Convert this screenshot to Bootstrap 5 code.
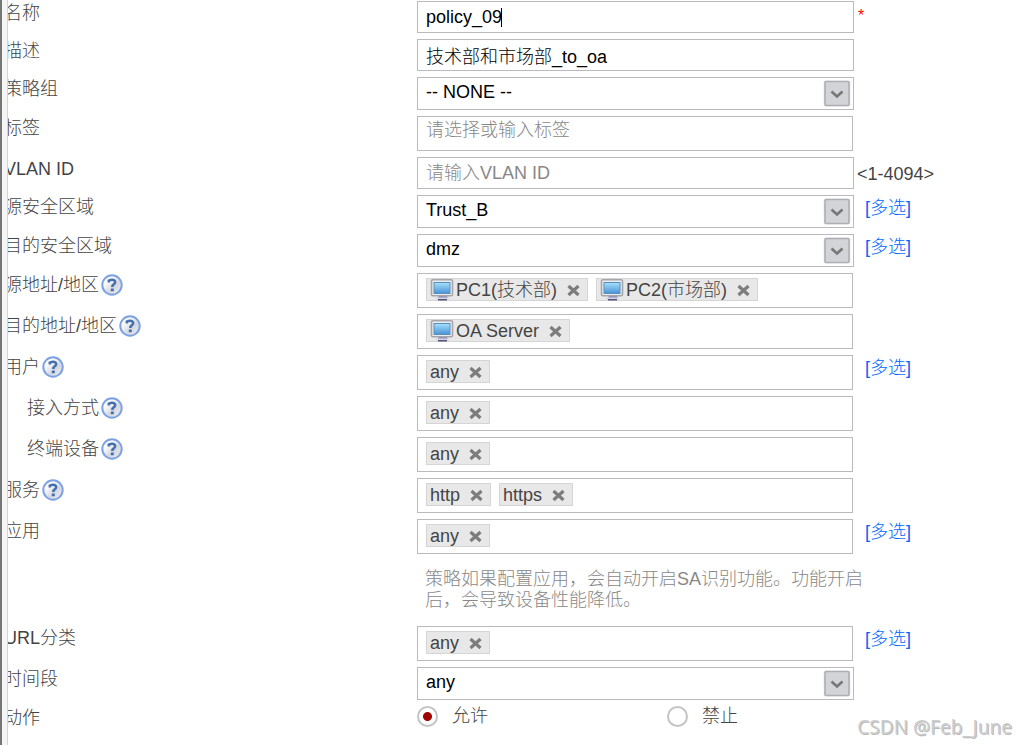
<!DOCTYPE html>
<html lang="zh-CN">
<head>
<meta charset="utf-8">
<meta name="viewport" content="width=device-width, initial-scale=1">
<title>安全策略</title>
<link href="https://cdn.jsdelivr.net/npm/bootstrap@5.3.0/dist/css/bootstrap.min.css" rel="stylesheet">
<style>
body{font-family:"Liberation Sans","Noto Sans CJK SC",sans-serif;font-weight:300;font-size:18px;line-height:22px;color:#444;background:#f5f5f5;border-left:2px solid #757575;padding-left:5px;min-height:100vh}
.panel{background:#fff;border-left:1px solid #d4d4d4;min-height:100vh;padding-top:1px;overflow:hidden}
.policy-row{display:grid;grid-template-columns:minmax(0,409fr) minmax(0,437fr) minmax(0,162fr);margin-bottom:6px}
.field-name{margin-left:-4px;display:flex;align-items:center;gap:2px;height:24px}
.field-name.sub{padding-left:23px}
.field-name svg{width:22px;height:22px;display:block}
.box,.form-control.box,.form-select.box{border:1px solid #b9b9be;border-radius:0;color:#000;font-size:18px;font-weight:300;line-height:22px;padding:0 8px;box-shadow:none;background-color:#fff}
.form-control.box{height:32px}
.form-control.box::placeholder{color:#888;opacity:1}
.form-control.tag-input{height:35px;padding-bottom:7px;width:calc(100% - 1px)}
.form-select.box{height:33px;padding:0 36px 3px 8px;background-repeat:no-repeat;background-position:right 2px top 2px;background-size:28px 27px;background-image:url("data:image/svg+xml,%3Csvg xmlns='http://www.w3.org/2000/svg' viewBox='0 0 28 27'%3E%3Crect x='.5' y='.5' width='27' height='26' rx='2' fill='%23eeeeef'/%3E%3Crect x='2' y='1.5' width='24' height='24' rx='1' fill='%23d3d4d7' stroke='%23acafb3' stroke-width='1.6'/%3E%3Cpath d='M8.5 11.5l5.5 5 5.5-5' fill='none' stroke='%23777' stroke-width='2.6'/%3E%3C/svg%3E")}
.tag-box{height:35px;width:calc(100% - 1px);padding:4px 8px!important;display:flex;align-items:flex-start;gap:8px}
.chip{height:23px;border:1px solid #d5d5d5;background:#e8e8e8;color:#444;display:flex;align-items:center;padding:0 7px 0 3px;white-space:nowrap;line-height:22px}
.chip .pc{width:24px;height:22px;margin-right:2px}
.chip button{border:0;background:none;padding:0;margin-left:10px;width:13px;height:22px;display:flex;align-items:center}
.chip button svg{width:13px;height:13px;margin-top:1px}
.extra{padding:2px 0 0 11px}
.extra a{color:#06f;text-decoration:none}
.hint{padding:6px 0 0 3px}
.star{color:red;padding:4px 0 0 4px;font-size:16px}
.note{margin:15px -12px 9px 0;padding-left:8px;line-height:21px;color:#888}
.caret{left:84px;top:7px;width:1px;height:19px;background:#000}
.choices{display:flex}
.choice{display:flex;flex:none;width:250px;gap:14px;line-height:20px}
.form-check-input.dot{width:21px;height:21px;margin:0;border:2px solid #c4c4c4;background-color:#fff;box-shadow:none;flex:none}
.form-check-input.dot:checked{border-color:#c4c4c4;background-color:#fff;background-image:radial-gradient(circle,#a00000 4px,transparent 5px);background-size:100% 100%}
.watermark{right:4px;bottom:5px;font-family:"Noto Sans",sans-serif;font-size:19px;font-weight:400;line-height:26px;color:#ccc;text-shadow:1px 1px 0 #bbb}
.symbols{width:0;height:0}
</style>
</head>
<body class="position-relative">
<svg class="symbols position-absolute" aria-hidden="true">
  <defs>
    <linearGradient id="scr" x1="0" y1="0" x2="0" y2="1"><stop offset="0" stop-color="#a5e1fa"/><stop offset="1" stop-color="#4a92d8"/></linearGradient>
    <linearGradient id="hg" x1="0" y1="0" x2="1" y2="1"><stop offset=".3" stop-color="#fafafc"/><stop offset=".6" stop-color="#d5d7e0"/><stop offset="1" stop-color="#f2f2f5"/></linearGradient>
  </defs>
  <symbol id="pc" viewBox="0 0 24 22">
    <path d="M9 17h8l1 3H7z" fill="#8a88b8"/><rect x="6" y="18.5" width="13" height="2" rx="1" fill="#d6d6e6"/><rect x="8" y="20" width="9" height="1.5" fill="#555579"/>
    <rect x="1.5" y=".8" width="21" height="16" rx="1.5" fill="#eeeef0" stroke="#a5a5ab" stroke-width="1.6"/>
    <rect x="4" y="3.5" width="16" height="11" fill="url(#scr)" stroke="#5690bd"/>
  </symbol>
  <symbol id="x" viewBox="0 0 13 13"><path d="M1.5 2l10 9M11.5 2l-10 9" stroke="#7d7d7d" stroke-width="3.2"/></symbol>
  <symbol id="help" viewBox="0 0 22 22">
    <circle cx="11" cy="11" r="9.7" fill="url(#hg)" stroke="#7ca2e3" stroke-width="2"/>
    <path d="M7.8 8.5V6.6Q11 5.2 13 6.2Q15 7.6 13.6 9.5Q11.3 11 11.3 13" fill="none" stroke="#426fae" stroke-width="2.5"/><rect x="9.8" y="14.4" width="3" height="2.8" rx=".5" fill="#426fae"/>
  </symbol>
</svg>
<form class="panel">
  <div class="policy-row"><label class="field-name" for="name">名称</label><div class="position-relative"><input id="name" class="form-control box" value="policy_09"><span class="caret position-absolute"></span></div><div class="star">*</div></div>
  <div class="policy-row"><label class="field-name" for="desc">描述</label><input id="desc" class="form-control box" value="技术部和市场部_to_oa"></div>
  <div class="policy-row"><label class="field-name" for="group">策略组</label><select id="group" class="form-select box"><option>-- NONE --</option></select></div>
  <div class="policy-row"><label class="field-name" for="tag">标签</label><input id="tag" class="form-control box tag-input" placeholder="请选择或输入标签"></div>
  <div class="policy-row"><label class="field-name" for="vlan">VLAN ID</label><input id="vlan" class="form-control box" placeholder="请输入VLAN ID"><div class="hint">&lt;1-4094&gt;</div></div>
  <div class="policy-row"><label class="field-name" for="src">源安全区域</label><select id="src" class="form-select box"><option>Trust_B</option></select><div class="extra"><a href="#">[多选]</a></div></div>
  <div class="policy-row"><label class="field-name" for="dst">目的安全区域</label><select id="dst" class="form-select box"><option>dmz</option></select><div class="extra"><a href="#">[多选]</a></div></div>
  <div class="policy-row"><div class="field-name">源地址/地区<svg><use href="#help"/></svg></div>
    <div class="box tag-box"><span class="chip"><svg class="pc"><use href="#pc"/></svg>PC1(技术部)<button type="button" aria-label="删除"><svg><use href="#x"/></svg></button></span><span class="chip"><svg class="pc"><use href="#pc"/></svg>PC2(市场部)<button type="button" aria-label="删除"><svg><use href="#x"/></svg></button></span></div></div>
  <div class="policy-row"><div class="field-name">目的地址/地区<svg><use href="#help"/></svg></div>
    <div class="box tag-box"><span class="chip"><svg class="pc"><use href="#pc"/></svg>OA Server<button type="button" aria-label="删除"><svg><use href="#x"/></svg></button></span></div></div>
  <div class="policy-row"><div class="field-name">用户<svg><use href="#help"/></svg></div>
    <div class="box tag-box"><span class="chip">any<button type="button" aria-label="删除"><svg><use href="#x"/></svg></button></span></div><div class="extra"><a href="#">[多选]</a></div></div>
  <div class="policy-row"><div class="field-name sub">接入方式<svg><use href="#help"/></svg></div>
    <div class="box tag-box"><span class="chip">any<button type="button" aria-label="删除"><svg><use href="#x"/></svg></button></span></div></div>
  <div class="policy-row"><div class="field-name sub">终端设备<svg><use href="#help"/></svg></div>
    <div class="box tag-box"><span class="chip">any<button type="button" aria-label="删除"><svg><use href="#x"/></svg></button></span></div></div>
  <div class="policy-row"><div class="field-name">服务<svg><use href="#help"/></svg></div>
    <div class="box tag-box"><span class="chip">http<button type="button" aria-label="删除"><svg><use href="#x"/></svg></button></span><span class="chip">https<button type="button" aria-label="删除"><svg><use href="#x"/></svg></button></span></div></div>
  <div class="policy-row"><div class="field-name">应用</div>
    <div><div class="box tag-box"><span class="chip">any<button type="button" aria-label="删除"><svg><use href="#x"/></svg></button></span></div><p class="note">策略如果配置应用，会自动开启SA识别功能。功能开启后，会导致设备性能降低。</p></div><div class="extra"><a href="#">[多选]</a></div></div>
  <div class="policy-row"><div class="field-name">URL分类</div>
    <div class="box tag-box"><span class="chip">any<button type="button" aria-label="删除"><svg><use href="#x"/></svg></button></span></div><div class="extra"><a href="#">[多选]</a></div></div>
  <div class="policy-row"><label class="field-name" for="time">时间段</label><select id="time" class="form-select box"><option>any</option></select></div>
  <div class="policy-row mb-0"><div class="field-name">动作</div>
    <div class="choices"><label class="choice"><input type="radio" name="act" class="form-check-input dot" checked>允许</label><label class="choice"><input type="radio" name="act" class="form-check-input dot">禁止</label></div></div>
</form>
<div class="watermark position-absolute">CSDN @Feb_June</div>
<script src="https://cdn.jsdelivr.net/npm/bootstrap@5.3.0/dist/js/bootstrap.bundle.min.js"></script>
</body>
</html>
